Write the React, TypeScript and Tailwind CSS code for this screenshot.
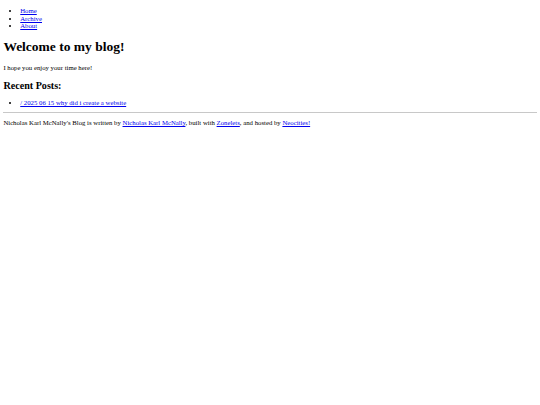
export default function App() {
  const link = "text-[#0000ee] underline";
  return (
    <div className="min-h-screen bg-white px-[3.375px] font-['Liberation_Serif',serif] text-[6.75px] leading-[1.15] text-black">
      <ul className="my-[6.75px] list-disc pl-[16.875px]">
        <li>
          <a href="#" className={link}>Home</a>
        </li>
        <li>
          <a href="#" className={link}>Archive</a>
        </li>
        <li>
          <a href="#" className={link}>About</a>
        </li>
      </ul>
      <h1 className="my-[9.05px] text-[13.5px] font-bold leading-[1.15]">Welcome to my blog!</h1>
      <p className="my-[6.75px]">I hope you enjoy your time here!</p>
      <h2 className="mt-[8.4px] mb-[7.6px] text-[10.125px] font-bold leading-[1.15]">Recent Posts:</h2>
      <ul className="mt-[6.75px] mb-[5.2px] list-disc pl-[16.875px]">
        <li>
          <a href="#" className={link}>/ 2025 06 15 why did i create a website</a>
        </li>
      </ul>
      <hr className="my-[3.375px] border-t border-[#c8c8c8]" />
      <footer>
        <p className="my-[6.2px]">
          Nicholas Karl McNally's Blog is written by{" "}
          <a href="#" className={link}>Nicholas Karl McNally</a>, built with{" "}
          <a href="#" className={link}>Zonelets</a>, and hosted by{" "}
          <a href="#" className={link}>Neocities!</a>
        </p>
      </footer>
    </div>
  );
}
